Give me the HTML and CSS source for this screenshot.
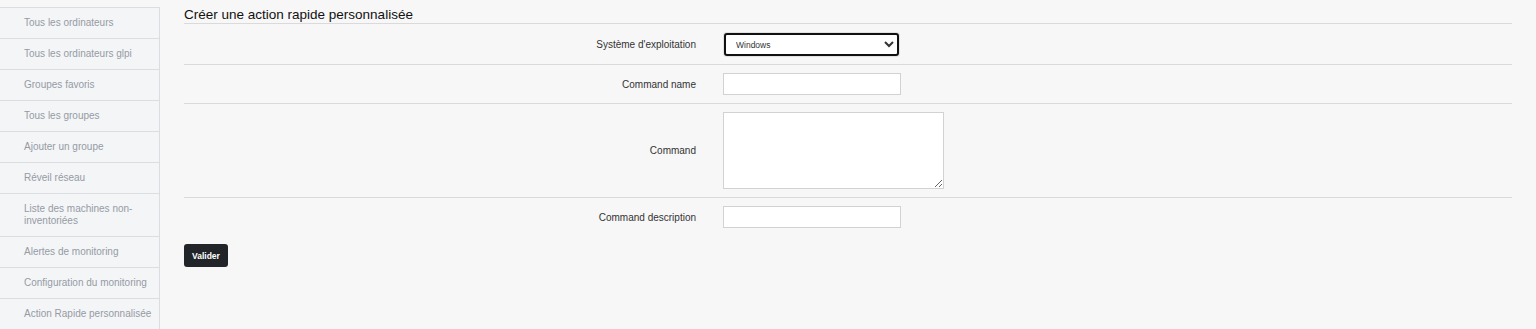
FILE: index.html
```html
<!DOCTYPE html>
<html>
  <head>
    <meta name="viewport" content="width=device-width,initial-scale=1.0">
    <title>Action rapide personnalisée</title>
    <link rel="stylesheet" href="styles.css">
  </head>
  <body>
    <div class="layout">
      <ul class="sidebar">
        <li>Tous les ordinateurs</li>
        <li>Tous les ordinateurs glpi</li>
        <li>Groupes favoris</li>
        <li>Tous les groupes</li>
        <li>Ajouter un groupe</li>
        <li>Réveil réseau</li>
        <li>Liste des machines non-inventoriées</li>
        <li>Alertes de monitoring</li>
        <li>Configuration du monitoring</li>
        <li>Action Rapide personnalisée</li>
      </ul>
      <div class="main">
        <h2 class="title">Créer une action rapide personnalisée</h2>
        <form class="form" action="">
          <div class="row">
            <label class="label" for="os">Système d'exploitation</label>
            <div class="field">
              <select id="os" class="select">
                <option>Windows</option>
                <option>Linux</option>
                <option>MacOS</option>
              </select>
            </div>
          </div>
          <div class="row">
            <label class="label" for="name">Command name</label>
            <div class="field"><input id="name" class="input" type="text"></div>
          </div>
          <div class="row">
            <label class="label" for="cmd">Command</label>
            <div class="field"><textarea id="cmd" class="textarea"></textarea></div>
          </div>
          <div class="row last">
            <label class="label" for="desc">Command description</label>
            <div class="field"><input id="desc" class="input" type="text"></div>
          </div>
          <button class="btn" type="button">Valider</button>
        </form>
      </div>
    </div>
  </body>
</html>
```

FILE: styles.css
```css
body { margin: 0; background-color: #f7f7f7; color: #333; font-family: "Liberation Sans", Arial, sans-serif; }

.layout { display: flex; align-items: flex-start; }

.sidebar { list-style: none; margin: 7px 0 0 0; padding: 0; width: 159px; flex-shrink: 0; background: #f4f5f7; border-top: 1px solid #dcdde0; border-right: 1px solid #dcdde0; }
.sidebar > li { padding: 9px 4px 9px 24px; font-size: 10px; line-height: 12px; color: #949ba4; border-bottom: 1px solid #dcdde0; }

.main { flex: 1; padding: 0 24px 0 24px; }
.title { margin: 0; padding: 7px 0 0 0; font-size: 13.5px; font-weight: normal; line-height: 16px; color: #111; border-bottom: 1px solid #dadada; }

.row { display: grid; grid-template-columns: 539px 1fr; align-items: center; padding: 8px 0; border-bottom: 1px solid #dadada; }
.row.last { border-bottom: none; }
.label { text-align: right; padding-right: 27px; font-size: 10px; color: #333; }
.field { display: flex; }

.input { box-sizing: border-box; width: 178px; height: 22px; margin: 0; border: 1px solid #d2d2d2; background: #fff; }
.textarea { box-sizing: border-box; width: 221px; height: 77px; margin: 0; border: 1px solid #d2d2d2; background: #fff; resize: both; }
.select { box-sizing: border-box; width: 175px; height: 23px; margin: 1px 0 0 1px; padding: 0 0 0 6px; font-size: 8.5px; color: #333; font-family: "Liberation Sans", Arial, sans-serif; background: #fff; border: 2px solid #111; border-radius: 3px; box-shadow: 0 0 0 1px #e2e2e2; }

.btn { margin-top: 8px; height: 23px; padding: 0 8px; background: #212529; color: #fff; border: none; border-radius: 3px; font-size: 8.5px; font-weight: bold; font-family: "Liberation Sans", Arial, sans-serif; }
```
